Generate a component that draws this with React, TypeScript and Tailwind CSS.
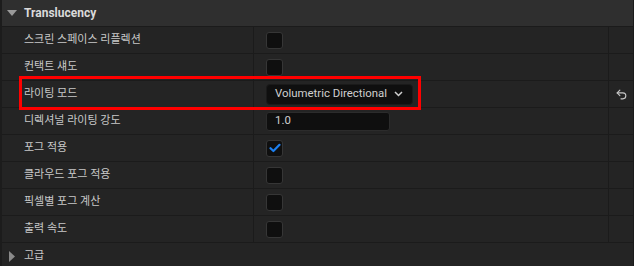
import { Undo2 } from 'lucide-react'

const rows: { label: string; kind: 'check' | 'dropdown' | 'number'; checked?: boolean; value?: string }[] = [
  { label: '스크린 스페이스 리플렉션', kind: 'check' },
  { label: '컨택트 섀도', kind: 'check' },
  { label: '라이팅 모드', kind: 'dropdown', value: 'Volumetric Directional' },
  { label: '디렉셔널 라이팅 강도', kind: 'number', value: '1.0' },
  { label: '포그 적용', kind: 'check', checked: true },
  { label: '클라우드 포그 적용', kind: 'check' },
  { label: '픽셀별 포그 계산', kind: 'check' },
  { label: '출력 속도', kind: 'check' },
]

function Checkbox({ checked }: { checked?: boolean }) {
  return (
    <div className="w-[17px] h-[17px] rounded-[3px] bg-[#0f0f0f] border border-[#363636] flex items-center justify-center">
      {checked && (
        <svg width="12" height="10" viewBox="0 0 12 10" fill="none">
          <path d="M1.5 5.2 4.4 8 10.5 1.8" stroke="#1c7ff0" strokeWidth="2.2" strokeLinecap="round" strokeLinejoin="round" />
        </svg>
      )}
    </div>
  )
}

export default function App() {
  return (
    <div
      className="relative w-[634px] h-[266px] overflow-hidden bg-[#242424] text-[11px] text-[#c8c8c8]"
      style={{ fontFamily: 'Roboto, "Noto Sans CJK KR", sans-serif' }}
    >
      <div className="border-l-2 border-[#1c1c1c] border-r border-r-[#1a1a1a] h-full flex flex-col">
        {/* Category header */}
        <div className="h-[26px] shrink-0 bg-[#2f2f2f] border-b border-[#1b1b1b] flex items-center box-content">
          <svg className="ml-[5px] mr-[7px]" width="10" height="6" viewBox="0 0 10 6">
            <path d="M0 0h10L5 6z" fill="#9a9a9a" />
          </svg>
          <span className="font-bold text-[#dadada] text-[12px]">Translucency</span>
        </div>

        {/* Properties */}
        {rows.map((row) => (
          <div key={row.label} className="h-[26px] shrink-0 box-content border-b border-[#1b1b1b] flex">
            <div className="w-[252px] shrink-0 border-r border-[#1b1b1b] flex items-center pl-[22px] pt-px">{row.label}</div>
            <div className="w-[355px] shrink-0 border-r border-[#1b1b1b] flex items-center pl-[12px]">
              {row.kind === 'check' && <Checkbox checked={row.checked} />}
              {row.kind === 'dropdown' && (
                <div className="w-[147px] h-[21px] rounded-[4px] bg-[#0f0f0f] border border-[#1a1a1a] flex items-center pl-[8px] text-[11.4px] text-[#d0d0d0]">
                  <span>{row.value}</span>
                  <svg className="ml-[7px]" width="9" height="6" viewBox="0 0 9 6" fill="none">
                    <path d="M1 1l3.5 3.5L8 1" stroke="#d0d0d0" strokeWidth="1.5" />
                  </svg>
                </div>
              )}
              {row.kind === 'number' && (
                <div className="w-[124px] h-[19px] rounded-[3px] bg-[#0f0f0f] border border-[#2c2c2c] flex items-center pl-[8px] text-[11.4px] text-[#d0d0d0]">
                  {row.value}
                </div>
              )}
            </div>
            <div className="flex-1 flex items-center justify-center">
              {row.kind === 'dropdown' && <Undo2 size={13} strokeWidth={2} className="text-[#c8c8c8]" />}
            </div>
          </div>
        ))}

        {/* Advanced */}
        <div className="h-[26px] shrink-0 flex items-center">
          <svg className="ml-[7px] mr-[9px]" width="6" height="11" viewBox="0 0 6 11">
            <path d="M0 0l6 5.5L0 11z" fill="#8a8a8a" />
          </svg>
          <span>고급</span>
        </div>
      </div>

      {/* highlight annotation */}
      <div className="absolute left-[19px] top-[76px] w-[402px] h-[34px] border-[3px] border-[#ff0000] pointer-events-none" />
    </div>
  )
}
